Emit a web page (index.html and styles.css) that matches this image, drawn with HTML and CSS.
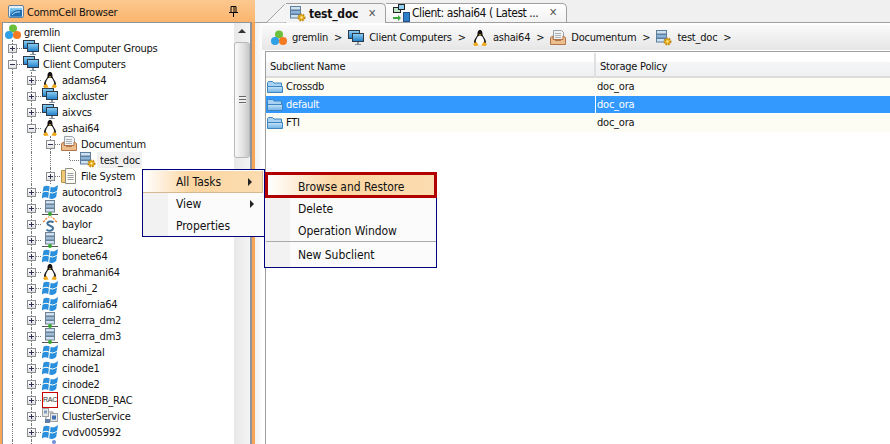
FILE: index.html
```html
<!DOCTYPE html>
<html lang="en">
<head>
<meta charset="utf-8">
<title>CommCell Browser</title>
<link rel="stylesheet" href="styles.css">
</head>
<body>
<svg class="defs" width="0" height="0" aria-hidden="true">
  <defs>
    <linearGradient id="gBlue" x1="0" y1="0" x2="0" y2="1"><stop offset="0" stop-color="#8fd0f5"/><stop offset="1" stop-color="#1f7fc8"/></linearGradient>
    <linearGradient id="gFolder" x1="0" y1="0" x2="0" y2="1"><stop offset="0" stop-color="#c8e4f8"/><stop offset="1" stop-color="#6fb0e4"/></linearGradient>
    <symbol id="i-gremlin" viewBox="0 0 16 16">
      <circle cx="8" cy="4.5" r="4" fill="#6cbf3a"/><circle cx="4" cy="11" r="4" fill="#2f9fe6"/><circle cx="12" cy="11" r="4" fill="#f47a22"/>
    </symbol>
    <symbol id="i-screens" viewBox="0 0 16 16">
      <rect x="0.500" y="0.500" width="11" height="8" fill="url(#gBlue)" stroke="#2d3a48"/>
      <rect x="4.500" y="3.500" width="11" height="8" fill="url(#gBlue)" stroke="#2d3a48"/>
      <path d="M9 12h2v2h2v1H7v-1h2z" fill="#8a949c"/>
    </symbol>
    <symbol id="i-tux" viewBox="0 0 16 16">
      <path d="M8 0C5.800 0 5.500 2.500 5.500 4.500 5.300 6.500 2 9 2 12.500L5 14h6l3-1.500C14 9 10.700 6.500 10.500 4.500 10.500 2.500 10.200 0 8 0z" fill="#111"/>
      <path d="M8 5.500c-2.300 0-4.200 3.500-4.200 6.500l1.200 2.500h6l1.200-2.500c0-3-1.900-6.500-4.200-6.500z" fill="#fff"/>
      <path d="M1 14 4.500 11.800 6.500 15.500 2.500 16zM15 14 11.500 11.800 9.500 15.500 13.500 16z" fill="#f0a818"/>
      <path d="M6.800 4h2.400L8 5.500z" fill="#f0a818"/>
    </symbol>
    <symbol id="i-win" viewBox="0 0 16 16">
      <path d="M1.500 2.800C3.500 1.500 5.500 1.500 7.700 2.500L7 7.500C5 6.500 3 6.500.7 7.800zM8.700 2.800C10.800 4 12.800 3.600 16 1L15.200 6.500C12.800 8.500 10.500 8.800 8 8zM.5 8.800C2.800 7.500 4.800 7.500 6.900 8.500L6.200 14C4 13 2.200 13-.2 14.500zM7.900 9C10.300 9.800 12.500 9.500 15 7.600L14.200 13C12 15 9.800 15.500 7.200 14.500z" fill="#2a8fdc"/>
    </symbol>
    <symbol id="i-server" viewBox="0 0 16 16">
      <rect x="3.500" y="0.500" width="9" height="3.500" fill="#cfe0f0" stroke="#6d7f92"/>
      <rect x="3.500" y="4.500" width="9" height="3.500" fill="#9dbcd8" stroke="#6d7f92"/>
      <rect x="3.500" y="8.500" width="9" height="3.500" fill="#cfe0f0" stroke="#6d7f92"/>
      <path d="M0 14.500h16" stroke="#555"/><circle cx="8" cy="14" r="2" fill="#35a82e"/>
    </symbol>
    <symbol id="i-sun" viewBox="0 0 16 16">
      <path d="M1 6 3 4.500M3.500 3.500 5 2M6.500 1.500 7 .5M9 .5 9.500 1.500M11 2 12.500 3.500M13 4.500 15 6" stroke="#ee7c28" stroke-width="1.300" fill="none"/>
      <path d="M11.500 6.500C10 4.800 5.500 5 5.300 7.500 5.200 10 11 9.500 11 12.300 11 15 6 15.500 4.500 13.500" stroke="#3f6f96" stroke-width="2" fill="none"/>
    </symbol>
    <symbol id="i-folder" viewBox="0 0 16 16">
      <path d="M.5 13V3.500l1-1h4l1.500 1.500h7.500v9z" fill="#a9d2f2" stroke="#3f86c0"/>
      <path d="M.5 13.500V7.500h15v6z" fill="url(#gFolder)" stroke="#3f86c0"/>
    </symbol>
    <symbol id="i-tray" viewBox="0 0 16 16">
      <path d="M3.500.5h8l2 2v7h-10z" fill="#f2f2f2" stroke="#98a0a8"/>
      <path d="M5 3.500h6M5 5.500h6M5 7.500h6" stroke="#a8b0b8"/>
      <path d="M.5 7.500 3 6v3.500h10V6l2.500 1.500v7H.5z" fill="#eebd8c" stroke="#b0764a"/>
      <path d="M5 10.500h6" stroke="#b0764a"/>
    </symbol>
    <symbol id="i-files" viewBox="0 0 16 16">
      <path d="M.5 2.500h5v12h-5z" fill="#f0c878" stroke="#b89448"/>
      <path d="M4.500 .5h7l3 3v12h-10z" fill="#fbfbf4" stroke="#8e8e80"/>
      <path d="M6.500 5.500h6M6.500 7.500h6M6.500 9.500h6M6.500 11.500h6" stroke="#9aa0a8"/>
    </symbol>
    <symbol id="i-sub" viewBox="0 0 16 16">
      <rect x="0.500" y="0.500" width="10" height="3.500" fill="#cfe0f0" stroke="#5d7f9e"/>
      <rect x="0.500" y="4.500" width="10" height="3.500" fill="#8db4d8" stroke="#5d7f9e"/>
      <rect x="0.500" y="8.500" width="10" height="3.500" fill="#cfe0f0" stroke="#5d7f9e"/>
      <circle cx="11.500" cy="11.500" r="3" fill="#f0b820" stroke="#c08810" stroke-width="2" stroke-dasharray="1.500 1"/>
      <circle cx="11.500" cy="11.500" r="1" fill="#fff3c0"/>
    </symbol>
    <symbol id="i-cluster" viewBox="0 0 16 16">
      <rect x="0.500" y="0.500" width="6" height="8" fill="#e8e8e8" stroke="#a0a0a0"/>
      <rect x="2" y="2.500" width="3" height="3" fill="#7f9fc0"/>
      <rect x="8.500" y="5.500" width="7" height="8" fill="#e8e8e8" stroke="#a0a0a0"/>
      <rect x="10" y="7.500" width="4" height="4" fill="#3f6fb0"/>
      <rect x="3" y="11" width="5" height="4" fill="#5f7fa8"/>
      <path d="M7 4h4v1M4 9v2" stroke="#8a8a8a" fill="none"/>
    </symbol>
    <symbol id="i-dot" viewBox="0 0 16 16"><circle cx="12" cy="2" r="2" fill="#6f8fd8"/></symbol>
    <symbol id="i-client" viewBox="0 0 18 18">
      <rect x="1.500" y="3.500" width="7" height="5" fill="#bfe6c8" stroke="#222"/>
      <rect x="6.500" y="0.500" width="6" height="5" fill="#8fd0f5" stroke="#222"/>
      <path d="M1 13h5v-2l3 3-3 3v-2H1z" fill="#3aa83a"/>
      <rect x="11.500" y="8.500" width="6" height="9" fill="#2f7fc8" stroke="#1f4f88"/>
    </symbol>
    <symbol id="i-browser" viewBox="0 0 16 13">
      <rect x="0.500" y="0.500" width="15" height="12" rx="1.500" fill="#e8f0f8" stroke="#5f7f9c"/>
      <rect x="2" y="3" width="12" height="8.500" fill="url(#gBlue)"/>
      <path d="M2 11.500c2-6 6-7 12-6.500v6.500z" fill="#1c6fb4"/>
      <path d="M4 10c2-2.500 5-3.500 8-3" stroke="#cfe8f8" fill="none"/>
    </symbol>
  </defs>
</svg>

<div class="app">
  <aside class="browser">
    <header class="browser-head">
      <svg class="head-icon"><use href="#i-browser"/></svg>
      <span class="head-title">CommCell Browser</span>
      <svg class="pin" viewBox="0 0 9 11"><path d="M2 .5h5v6H2zM5 1v5M0 6.500h9M4.500 7v4" fill="none" stroke="#000"/></svg>
    </header>
    <div class="browser-body">
      <div class="tree">
        <div class="row"><svg class="ico root"><use href="#i-gremlin"/></svg><span class="lab root-lab">gremlin</span></div>
        <div class="row"><i class="col exp plus"></i><svg class="ico"><use href="#i-screens"/></svg><span class="lab">Client Computer Groups</span></div>
        <div class="row"><i class="col exp minus"></i><svg class="ico"><use href="#i-screens"/></svg><span class="lab">Client Computers</span></div>
        <div class="row"><i class="col v"></i><i class="col exp plus"></i><svg class="ico"><use href="#i-tux"/></svg><span class="lab">adams64</span></div>
        <div class="row"><i class="col v"></i><i class="col exp plus"></i><svg class="ico"><use href="#i-screens"/></svg><span class="lab">aixcluster</span></div>
        <div class="row"><i class="col v"></i><i class="col exp plus"></i><svg class="ico"><use href="#i-screens"/></svg><span class="lab">aixvcs</span></div>
        <div class="row"><i class="col v"></i><i class="col exp minus"></i><svg class="ico"><use href="#i-tux"/></svg><span class="lab">ashai64</span></div>
        <div class="row"><i class="col v"></i><i class="col v"></i><i class="col exp minus"></i><svg class="ico"><use href="#i-tray"/></svg><span class="lab">Documentum</span></div>
        <div class="row"><i class="col v"></i><i class="col v"></i><i class="col v"></i><i class="col elbow"></i><svg class="ico"><use href="#i-sub"/></svg><span class="lab hover">test_doc</span></div>
        <div class="row"><i class="col v"></i><i class="col v"></i><i class="col exp plus"></i><svg class="ico"><use href="#i-files"/></svg><span class="lab">File System</span></div>
        <div class="row"><i class="col v"></i><i class="col exp plus"></i><svg class="ico"><use href="#i-win"/></svg><span class="lab">autocontrol3</span></div>
        <div class="row"><i class="col v"></i><i class="col exp plus"></i><svg class="ico"><use href="#i-server"/></svg><span class="lab">avocado</span></div>
        <div class="row"><i class="col v"></i><i class="col exp plus"></i><svg class="ico"><use href="#i-sun"/></svg><span class="lab">baylor</span></div>
        <div class="row"><i class="col v"></i><i class="col exp plus"></i><svg class="ico"><use href="#i-server"/></svg><span class="lab">bluearc2</span></div>
        <div class="row"><i class="col v"></i><i class="col exp plus"></i><svg class="ico"><use href="#i-win"/></svg><span class="lab">bonete64</span></div>
        <div class="row"><i class="col v"></i><i class="col exp plus"></i><svg class="ico"><use href="#i-tux"/></svg><span class="lab">brahmani64</span></div>
        <div class="row"><i class="col v"></i><i class="col exp plus"></i><svg class="ico"><use href="#i-win"/></svg><span class="lab">cachi_2</span></div>
        <div class="row"><i class="col v"></i><i class="col exp plus"></i><svg class="ico"><use href="#i-win"/></svg><span class="lab">california64</span></div>
        <div class="row"><i class="col v"></i><i class="col exp plus"></i><svg class="ico"><use href="#i-server"/></svg><span class="lab">celerra_dm2</span></div>
        <div class="row"><i class="col v"></i><i class="col exp plus"></i><svg class="ico"><use href="#i-server"/></svg><span class="lab">celerra_dm3</span></div>
        <div class="row"><i class="col v"></i><i class="col exp plus"></i><svg class="ico"><use href="#i-win"/></svg><span class="lab">chamizal</span></div>
        <div class="row"><i class="col v"></i><i class="col exp plus"></i><svg class="ico"><use href="#i-win"/></svg><span class="lab">cinode1</span></div>
        <div class="row"><i class="col v"></i><i class="col exp plus"></i><svg class="ico"><use href="#i-win"/></svg><span class="lab">cinode2</span></div>
        <div class="row"><i class="col v"></i><i class="col exp plus"></i><span class="ico rac">RAC</span><span class="lab">CLONEDB_RAC</span></div>
        <div class="row"><i class="col v"></i><i class="col exp plus"></i><svg class="ico"><use href="#i-cluster"/></svg><span class="lab">ClusterService</span></div>
        <div class="row"><i class="col v"></i><i class="col exp plus"></i><svg class="ico"><use href="#i-win"/></svg><span class="lab">cvdv005992</span></div>
        <div class="row"><i class="col v"></i><i class="col exp plus"></i><svg class="ico"><use href="#i-dot"/></svg></div>
      </div>
      <div class="scrollbar">
        <div class="arrow-up"></div>
        <div class="thumb"><div class="grip"></div></div>
      </div>
    </div>
  </aside>

  <main class="content">
    <nav class="tabs">
      <svg class="tab-slope" viewBox="0 0 20 20"><path d="M0 20 19 1V20z" fill="#f4f4f4"/><path d="M0 19.500 18.500 1" stroke="#a0a0a0" fill="none"/></svg>
      <div class="tab active">
        <svg class="tab-ico"><use href="#i-sub"/></svg>
        <span class="tab-label">test_doc</span>
        <span class="close">✕</span>
      </div>
      <div class="tab second">
        <svg class="tab-ico"><use href="#i-client"/></svg>
        <span class="tab-label">Client: ashai64 ( Latest ...</span>
        <span class="close">✕</span>
      </div>
    </nav>
    <div class="crumbs">
      <svg class="ico"><use href="#i-gremlin"/></svg><span class="crumb">gremlin</span><span class="sep">&gt;</span>
      <svg class="ico"><use href="#i-screens"/></svg><span class="crumb">Client Computers</span><span class="sep">&gt;</span>
      <svg class="ico"><use href="#i-tux"/></svg><span class="crumb">ashai64</span><span class="sep">&gt;</span>
      <svg class="ico"><use href="#i-tray"/></svg><span class="crumb">Documentum</span><span class="sep">&gt;</span>
      <svg class="ico"><use href="#i-sub"/></svg><span class="crumb">test_doc</span><span class="sep">&gt;</span>
    </div>
    <div class="grid">
      <div class="thead">
        <div class="th first">Subclient Name</div>
        <div class="th">Storage Policy</div>
      </div>
      <div class="tr"><div class="td first"><svg class="ico"><use href="#i-folder"/></svg><span class="cell-name">Crossdb</span></div><div class="td">doc_ora</div></div>
      <div class="tr sel"><div class="td first"><svg class="ico"><use href="#i-folder"/></svg><span class="cell-name">default</span></div><div class="td">doc_ora</div></div>
      <div class="tr"><div class="td first"><svg class="ico"><use href="#i-folder"/></svg><span class="cell-name">FTI</span></div><div class="td">doc_ora</div></div>
    </div>
  </main>
</div>

<div class="menu menu-main">
  <div class="mi on">All Tasks<b class="tri"></b></div>
  <div class="mi">View<b class="tri"></b></div>
  <div class="mi">Properties</div>
</div>
<div class="menu menu-sub">
  <div class="mi picked">Browse and Restore</div>
  <div class="mi">Delete</div>
  <div class="mi">Operation Window</div>
  <div class="msep"></div>
  <div class="mi">New Subclient</div>
</div>
</body>
</html>
```
FILE: styles.css
```css
* { box-sizing: border-box; }
html, body { margin: 0; height: 100%; overflow: hidden; }
body { font: 11px/16px "DejaVu Sans Condensed", "DejaVu Sans", sans-serif; font-stretch: condensed; letter-spacing: -.22px; color: #111; background: #fff; }
.defs { position: absolute; }
.app { display: flex; height: 444px; }

/* left panel */
.browser { width: 255px; flex: none; display: flex; flex-direction: column; background: #f9a557; padding: 0 3px 0 2px; }
.browser-head { height: 22px; flex: none; display: flex; align-items: center; margin: 0 -3px 0 -2px; padding: 0 0 0 8px; background: linear-gradient(#fcc88f, #fbb56e); }
.head-icon { width: 16px; height: 13px; margin-right: 3px; }
.head-title { flex: 1; padding-top: 3px; }
.pin { width: 9px; height: 11px; margin-right: 17px; }
.browser-body { flex: 1; display: flex; min-height: 0; border: solid #8e949c; border-width: 1px 2px 0 1px; background: #fff; }
.tree { flex: 1; min-width: 0; overflow: hidden; padding-top: 1px; }
.row { height: 16px; display: flex; align-items: center; white-space: nowrap; }
.col { width: 19px; height: 16px; flex: none; display: block; position: relative; background-repeat: no-repeat; }
.v::before, .exp::before, .elbow::before { content: ""; position: absolute; z-index: 0; left: 9px; top: 0; bottom: 0; border-left: 1px dotted #777; }
.elbow::before { bottom: 8px; }
.exp::after, .elbow::after { content: ""; position: absolute; left: 10px; top: 8px; width: 9px; border-top: 1px dotted #777; }
.exp::before { clip-path: polygon(0 0, 100% 0, 100% 4px, 0 4px, 0 13px, 100% 13px, 100% 100%, 0 100%); }
.exp::after { clip-path: inset(0 0 0 4px); }
.plus { background-image: linear-gradient(#335, #335), linear-gradient(#335, #335), linear-gradient(#fff, #e0e0e0), linear-gradient(#8a8f96, #8a8f96); background-size: 5px 1px, 1px 5px, 7px 7px, 9px 9px; background-position: 7px 8px, 9px 6px, 6px 5px, 5px 4px; }
.minus { background-image: linear-gradient(#335, #335), linear-gradient(#fff, #e0e0e0), linear-gradient(#8a8f96, #8a8f96); background-size: 5px 1px, 7px 7px, 9px 9px; background-position: 7px 8px, 6px 5px, 5px 4px; }
.ico { width: 16px; height: 16px; flex: none; margin-left: 1px; }
.root { margin-left: 2px; }
.lab { margin-left: 4px; height: 16px; line-height: 16px; padding-top: 1px; }
.root-lab { margin-left: 3px; }
.hover { background: #f0f0f0; margin-left: 1px; padding: 1px 2px 0 3px; }
.rac { display: block; border: 1px solid #c00; font: 7px/14px "Liberation Sans", sans-serif; text-align: center; color: #333; letter-spacing: -.2px; }
.scrollbar { width: 16px; flex: none; position: relative; background: linear-gradient(90deg, #e8e8e8, #f4f4f4); display: flex; flex-direction: column; align-items: stretch; }
.arrow-up { height: 19px; flex: none; position: relative; }
.arrow-up::after { content: ""; position: absolute; left: 4px; top: 6px; border: 4px solid transparent; border-top: 0; border-bottom: 4px solid #333; }
.thumb { height: 116px; flex: none; display: flex; align-items: center; justify-content: center; background: linear-gradient(90deg, #fafafa, #e0e0e0 60%, #c8c8c8); border: 1px solid #b8b8b8; border-radius: 3px; }
.grip { width: 7px; height: 8px; background: repeating-linear-gradient(#666 0 1px, #eee 1px 3px); }

/* right panel */
.content { flex: 1; min-width: 0; display: flex; flex-direction: column; background: linear-gradient(90deg, #f0f0f0, #fff 8px); }
.tabs { height: 23px; flex: none; display: flex; align-items: flex-end; background: #f0f0f0; border-bottom: 1px solid #a0a0a0; padding-left: 12px; }
.tab-slope { width: 19px; height: 20px; flex: none; margin-bottom: -1px; }
.tab { height: 20px; flex: none; display: flex; align-items: center; border: 1px solid #a0a0a0; border-bottom: 0; border-left: 0; border-radius: 0 5px 0 0; margin-bottom: -1px; white-space: nowrap; font-size: 12px; }
.active { width: 100px; background: #f4f4f4; padding-left: 4px; }
.second { width: 181px; background: linear-gradient(#fff, #f2f2f2); padding-left: 6px; margin-bottom: 0; height: 19px; letter-spacing: -.45px; }
.tab-ico { width: 18px; height: 18px; flex: none; }
.active .tab-ico { width: 16px; height: 16px; }
.tab-label { flex: 1; margin-left: 2px; }
.active .tab-label { font-weight: 700; margin-left: 3px; }
.close { width: 13px; margin-right: 4px; flex: none; font-size: 11px; color: #555; letter-spacing: 0; }
.crumbs { height: 25px; flex: none; margin: 2px 0 0 7px; display: flex; align-items: center; padding-left: 9px; background: linear-gradient(#fafafa, #e6e6e6); }
.crumbs .ico { margin: 0; }
.crumb { margin-left: 5px; padding-top: 1px; }
.sep { margin: 0 6px 0 6px; padding-top: 1px; }
.grid { flex: 1; margin: 1px 0 0 10px; border: solid #a0a0a0; border-width: 1px 0 0 1px; background: #fff; }
.thead { height: 26px; display: flex; align-items: flex-end; background: linear-gradient(#fff 0, #fff 10px, #f4f6f8 10px, #eef0f2 24px, #dcdcdc 24px); }
.th { height: 25px; padding: 6px 0 0 4px; flex: 1; }
.th.first { flex: none; width: 330px; border-right: 2px solid #e0e0e0; }
.tr { display: flex; height: 18px; background: #fdfdf4; align-items: center; }
.tr.sel { background: #3399ff; color: #fff; height: 17px; margin-bottom: 1px; }
.td { padding-left: 1px; flex: 1; display: flex; align-items: center; height: 100%; }
.td.first { flex: none; width: 330px; padding-left: 1px; border-right: 1px solid transparent; }
.sel .td.first { border-right-color: #fff; }
.cell-name { margin-left: 3px; }
.td .ico { margin: 0; }

/* context menus */
.menu { position: absolute; border: 1px solid #00007f; background: linear-gradient(90deg, #f2f2f2 25px, #fbfbfb 25px); }
.menu-main { left: 142px; top: 169px; width: 123px; height: 68px; padding: 1px 0; }
.menu-sub { left: 264px; top: 172px; width: 173px; height: 96px; }
.mi { height: 22px; line-height: 22px; padding-left: 33px; position: relative; font-size: 12px; letter-spacing: -.05px; }
.on { background: linear-gradient(90deg, #fff, #fcd6a2 40%, #fbdcb0); border: solid #d8b890; border-width: 0 1px 1px 0; margin: 0 1px 0 0; padding-top: 1px; line-height: 21px; }
.picked { height: 26px; line-height: 22px; border: 3px solid #b00000; padding: 1px 0 0 30px; background: linear-gradient(90deg, #fff, #fcd6a2 40%, #fbdcb0); margin: -1px -1px 0 0; }
.tri { position: absolute; right: 10px; top: 7px; border: 4px solid transparent; border-right: 0; border-left: 4px solid #222; }
.msep { height: 1px; background: #aaa; margin: -1px 0 2px 1px; }
```
